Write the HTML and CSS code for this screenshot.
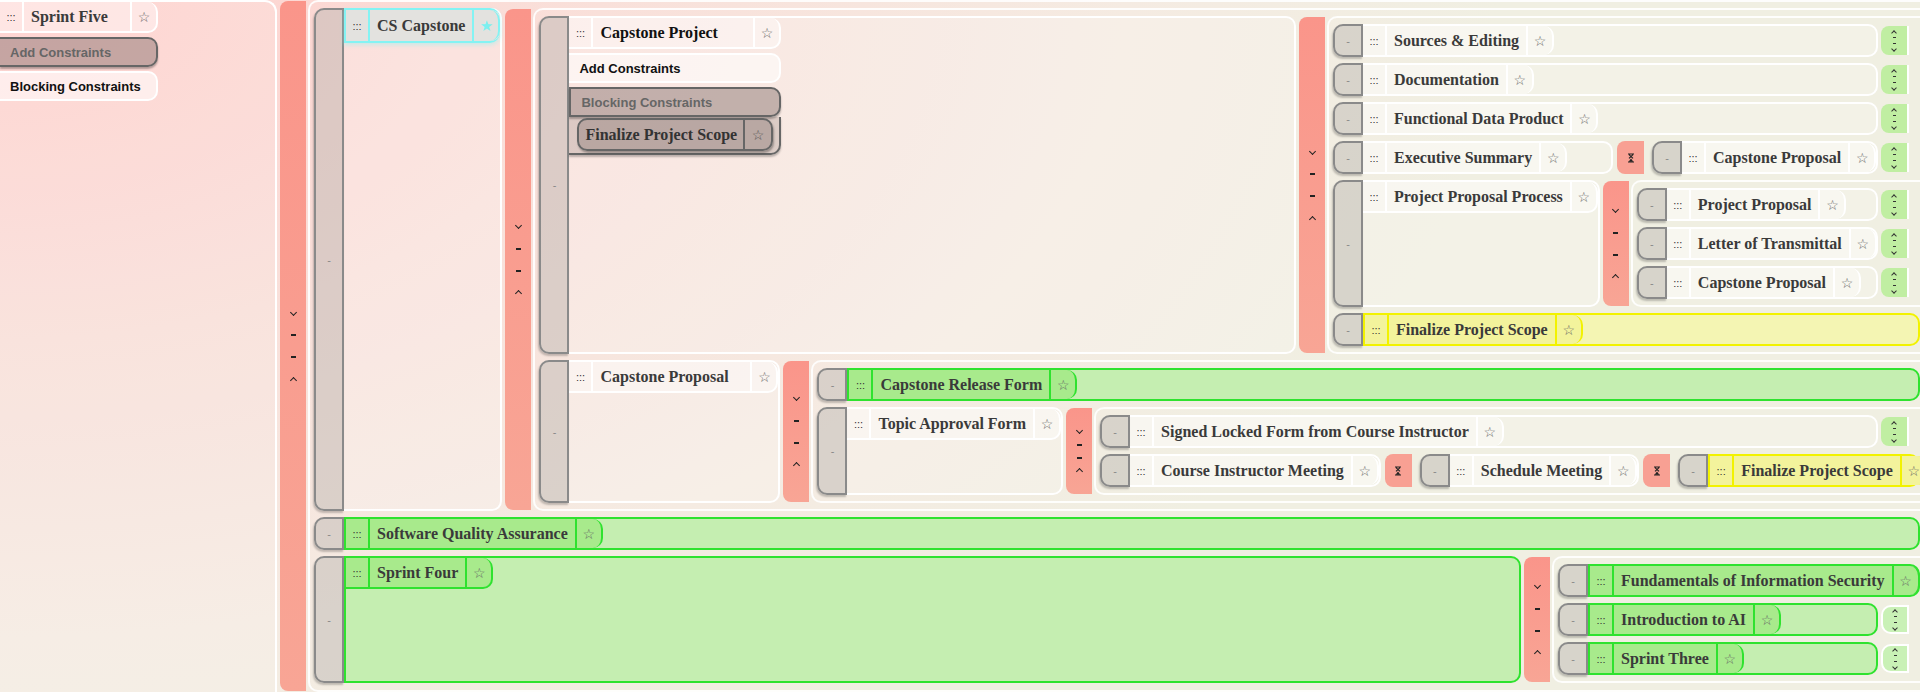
FILE: index.html
```html
<!DOCTYPE html>
<html lang="en">
<head>
<meta charset="utf-8">
<title>Tree</title>
<link rel="stylesheet" href="styles.css">
</head>
<body>
<div class="root">
  <div class="panel">
    <div class="stack">
      <div class="head hb"><span class="grip">:::</span><span class="title">Sprint Five</span><span class="star">☆</span></div>
      <div class="btn active">Add Constraints</div>
      <div class="btn">Blocking Constraints</div>
    </div>
  </div>
  <div class="conn"><i class="dn"></i><i class="ds"></i><i class="ds"></i><i class="up"></i></div>
  <div class="kids main">

    <div class="row">
      <div class="handle">-</div>
      <div class="card">
        <div class="head cy"><span class="grip">:::</span><span class="title">CS Capstone</span><span class="star">★</span></div>
      </div>
      <div class="conn"><i class="dn"></i><i class="ds"></i><i class="ds"></i><i class="up"></i></div>
      <div class="kids flex1">

        <div class="row">
          <div class="handle">-</div>
          <div class="card flex1">
            <div class="stack">
              <div class="head hb"><span class="grip">:::</span><span class="title dark">Capstone Project</span><span class="star">☆</span></div>
              <div class="btn">Add Constraints</div>
              <div class="btn active">Blocking Constraints</div>
              <div class="deps"><div class="chip"><span class="ct">Finalize Project Scope</span><span class="cs">☆</span></div></div>
            </div>
          </div>
          <div class="conn"><i class="dn"></i><i class="ds"></i><i class="ds"></i><i class="up"></i></div>
          <div class="kids k3">
            <div class="row">
              <div class="handle">-</div>
              <div class="card flex1"><div class="head"><span class="grip">:::</span><span class="title">Sources &amp; Editing</span><span class="star">☆</span></div></div>
              <div class="ctl"><i class="up"></i><i class="ds"></i><i class="ds"></i><i class="dn"></i></div>
            </div>
            <div class="row">
              <div class="handle">-</div>
              <div class="card flex1"><div class="head"><span class="grip">:::</span><span class="title">Documentation</span><span class="star">☆</span></div></div>
              <div class="ctl"><i class="up"></i><i class="ds"></i><i class="ds"></i><i class="dn"></i></div>
            </div>
            <div class="row">
              <div class="handle">-</div>
              <div class="card flex1"><div class="head"><span class="grip">:::</span><span class="title">Functional Data Product</span><span class="star">☆</span></div></div>
              <div class="ctl"><i class="up"></i><i class="ds"></i><i class="ds"></i><i class="dn"></i></div>
            </div>
            <div class="row">
              <div class="handle">-</div>
              <div class="card wex"><div class="head"><span class="grip">:::</span><span class="title">Executive Summary</span><span class="star">☆</span></div></div>
              <div class="hg"><svg width="8" height="10" viewBox="0 0 8 10"><path d="M1 1H7M1 9H7M2 1.6L6 5.4M6 1.6L2 5.4" stroke="#222" stroke-width="1.2" fill="none"/><path d="M4 5.6L6.4 8.8H1.6Z" fill="#222"/></svg></div>
              <div class="handle">-</div>
              <div class="card flex1"><div class="head"><span class="grip">:::</span><span class="title">Capstone Proposal</span><span class="star">☆</span></div></div>
              <div class="ctl"><i class="up"></i><i class="ds"></i><i class="ds"></i><i class="dn"></i></div>
            </div>
            <div class="row">
              <div class="handle">-</div>
              <div class="card"><div class="head hb"><span class="grip">:::</span><span class="title">Project Proposal Process</span><span class="star">☆</span></div></div>
              <div class="conn"><i class="dn"></i><i class="ds"></i><i class="ds"></i><i class="up"></i></div>
              <div class="kids flex1">
                <div class="row">
                  <div class="handle">-</div>
                  <div class="card flex1"><div class="head"><span class="grip">:::</span><span class="title">Project Proposal</span><span class="star">☆</span></div></div>
                  <div class="ctl"><i class="up"></i><i class="ds"></i><i class="ds"></i><i class="dn"></i></div>
                </div>
                <div class="row">
                  <div class="handle">-</div>
                  <div class="card flex1"><div class="head"><span class="grip">:::</span><span class="title">Letter of Transmittal</span><span class="star">☆</span></div></div>
                  <div class="ctl"><i class="up"></i><i class="ds"></i><i class="ds"></i><i class="dn"></i></div>
                </div>
                <div class="row">
                  <div class="handle">-</div>
                  <div class="card flex1"><div class="head"><span class="grip">:::</span><span class="title">Capstone Proposal</span><span class="star">☆</span></div></div>
                  <div class="ctl"><i class="up"></i><i class="ds"></i><i class="ds"></i><i class="dn"></i></div>
                </div>
              </div>
            </div>
            <div class="row">
              <div class="handle">-</div>
              <div class="card y flex1"><div class="head"><span class="grip">:::</span><span class="title">Finalize Project Scope</span><span class="star">☆</span></div></div>
            </div>
          </div>
        </div>

        <div class="row">
          <div class="handle">-</div>
          <div class="card">
            <div class="stack wide"><div class="head hb"><span class="grip">:::</span><span class="title">Capstone Proposal</span><span class="star">☆</span></div></div>
          </div>
          <div class="conn"><i class="dn"></i><i class="ds"></i><i class="ds"></i><i class="up"></i></div>
          <div class="kids flex1">
            <div class="row">
              <div class="handle">-</div>
              <div class="card g flex1"><div class="head"><span class="grip">:::</span><span class="title">Capstone Release Form</span><span class="star">☆</span></div></div>
            </div>
            <div class="row">
              <div class="handle">-</div>
              <div class="card"><div class="head hb"><span class="grip">:::</span><span class="title">Topic Approval Form</span><span class="star">☆</span></div></div>
              <div class="conn"><i class="dn"></i><i class="ds"></i><i class="ds"></i><i class="up"></i></div>
              <div class="kids flex1">
                <div class="row">
                  <div class="handle">-</div>
                  <div class="card flex1"><div class="head"><span class="grip">:::</span><span class="title">Signed Locked Form from Course Instructor</span><span class="star">☆</span></div></div>
                  <div class="ctl"><i class="up"></i><i class="ds"></i><i class="ds"></i><i class="dn"></i></div>
                </div>
                <div class="row">
                  <div class="handle">-</div>
                  <div class="card"><div class="head"><span class="grip">:::</span><span class="title">Course Instructor Meeting</span><span class="star">☆</span></div></div>
                  <div class="hg"><svg width="8" height="10" viewBox="0 0 8 10"><path d="M1 1H7M1 9H7M2 1.6L6 5.4M6 1.6L2 5.4" stroke="#222" stroke-width="1.2" fill="none"/><path d="M4 5.6L6.4 8.8H1.6Z" fill="#222"/></svg></div>
                  <div class="handle">-</div>
                  <div class="card"><div class="head"><span class="grip">:::</span><span class="title">Schedule Meeting</span><span class="star">☆</span></div></div>
                  <div class="hg"><svg width="8" height="10" viewBox="0 0 8 10"><path d="M1 1H7M1 9H7M2 1.6L6 5.4M6 1.6L2 5.4" stroke="#222" stroke-width="1.2" fill="none"/><path d="M4 5.6L6.4 8.8H1.6Z" fill="#222"/></svg></div>
                  <div class="handle">-</div>
                  <div class="card y flex1"><div class="head"><span class="grip">:::</span><span class="title">Finalize Project Scope</span><span class="star">☆</span></div></div>
                </div>
              </div>
            </div>
          </div>
        </div>

      </div>
    </div>

    <div class="row">
      <div class="handle">-</div>
      <div class="card g flex1"><div class="head"><span class="grip">:::</span><span class="title">Software Quality Assurance</span><span class="star">☆</span></div></div>
    </div>

    <div class="row">
      <div class="handle">-</div>
      <div class="card g flex1"><div class="head hb"><span class="grip">:::</span><span class="title">Sprint Four</span><span class="star">☆</span></div></div>
      <div class="conn"><i class="dn"></i><i class="ds"></i><i class="ds"></i><i class="up"></i></div>
      <div class="kids k4">
        <div class="row">
          <div class="handle">-</div>
          <div class="card g flex1"><div class="head"><span class="grip">:::</span><span class="title">Fundamentals of Information Security</span><span class="star">☆</span></div></div>
        </div>
        <div class="row">
          <div class="handle">-</div>
          <div class="card g flex1"><div class="head"><span class="grip">:::</span><span class="title">Introduction to AI</span><span class="star">☆</span></div></div>
          <div class="ctl lt"><i class="up"></i><i class="ds"></i><i class="ds"></i><i class="dn"></i></div>
        </div>
        <div class="row">
          <div class="handle">-</div>
          <div class="card g flex1"><div class="head"><span class="grip">:::</span><span class="title">Sprint Three</span><span class="star">☆</span></div></div>
          <div class="ctl lt"><i class="up"></i><i class="ds"></i><i class="ds"></i><i class="dn"></i></div>
        </div>
      </div>
    </div>

  </div>
</div>
</body>
</html>
```

FILE: styles.css
```css
* { box-sizing: border-box; }
html, body { margin: 0; height: 692px; overflow: hidden; }
body {
  background: radial-gradient(ellipse 1500px 850px at 0 0, #ffd0cd 0%, #f9e0da 40%, #f5ebe2 75%, #f0efe2 100%);
  font-family: "Liberation Sans", Arial, sans-serif;
}
i { font-style: normal; }

.root { display: flex; height: 692px; }

.panel {
  flex: 0 0 277px;
  border: 2px solid #fff;
  border-left: none;
  border-bottom: none;
  border-radius: 0 12px 0 0;
  background: rgba(255, 255, 255, 0.1);
}

/* node cards */
.card {
  --c: #fff;
  --cell: rgba(255, 255, 255, 0.4);
  display: flex;
  flex-direction: column;
  align-items: flex-start;
  min-width: 0;
  border: 2px solid var(--c);
  border-left: none;
  border-radius: 0 10px 10px 0;
  background: rgba(255, 255, 255, 0.2);
}
.card.g { --c: #2fe22f; --cell: #a8ea8c; background: #c5eeb1; border-left: 2px solid var(--c); }
.card.y { --c: #f2f200; --cell: #f3f39c; background: #f4f5b3; border-left: 2px solid var(--c); }
.card.wex { flex: 0 0 250px; }
.flex1 { flex: 1 1 0; }

.stack { display: flex; flex-direction: column; min-width: 158px; }
.stack.wide { min-width: 209px; }
.panel .stack { width: 158px; }

.head { display: flex; height: 29px; flex: none; }
.head.hb { height: 31px; }
.head.hb > * { border-bottom: 2px solid var(--c, #fff); }
.panel .head > * { --c: #fff; }

.grip {
  flex: none;
  width: 24px;
  display: flex;
  align-items: center;
  justify-content: center;
  font: 11px "Liberation Sans", Arial, sans-serif;
  color: #333;
  background: var(--cell, rgba(255, 255, 255, 0.4));
  border-right: 2px solid var(--c, #fff);
}
.title {
  flex: 1 0 auto;
  display: flex;
  align-items: center;
  padding: 0 7px;
  font: bold 16px "Liberation Serif", "Times New Roman", serif;
  color: #3a3a3a;
  white-space: nowrap;
  background: var(--cell, rgba(255, 255, 255, 0.4));
  border-right: 2px solid var(--c, #fff);
}
.title.dark { color: #111; }
.star {
  flex: none;
  width: 26px;
  display: flex;
  align-items: center;
  justify-content: center;
  font: 14px "DejaVu Sans", sans-serif;
  color: #666;
  background: var(--cell, rgba(255, 255, 255, 0.4));
  border-right: 2px solid var(--c, #fff);
  border-radius: 0 10px 10px 0;
}

/* cyan highlighted header */
.head.cy {
  --c: #84f3f3;
  --cell: #e3e2df;
  height: 35px;
  margin-top: -2px;
  border: 2px solid #84f3f3;
  border-right: none;
  border-radius: 0 10px 10px 0;
  box-shadow: 0 2px 4px rgba(132, 243, 243, 0.45);
}
.head.cy .star { color: #7cf0f0; font-size: 15px; }

/* buttons */
.btn {
  height: 30px;
  margin-top: 4px;
  display: flex;
  align-items: center;
  padding-left: 10px;
  font: bold 13px "Liberation Sans", Arial, sans-serif;
  color: #111;
  white-space: nowrap;
  background: rgba(255, 255, 255, 0.55);
  border: 2px solid #fff;
  border-left: none;
  border-radius: 0 10px 10px 0;
}
.btn.active {
  background: rgba(105, 85, 82, 0.38);
  border: 2px solid #666;
  color: #666;
  box-shadow: 0 2px 2px rgba(0, 0, 0, 0.3);
}
.panel .btn.active { border-left: none; }
.deps {
  height: 38px;
  display: flex;
  padding: 1px 6px 0 8px;
  background: rgba(120, 100, 95, 0.22);
  border: 2px solid #666;
  border-top: none;
  border-left: none;
  border-radius: 0 0 10px 0;
  box-shadow: 0 2px 2px rgba(0, 0, 0, 0.25);
}
.chip {
  display: flex;
  height: 33px;
  border: 2px solid #666;
  border-radius: 10px;
  background: rgba(105, 85, 82, 0.3);
  box-shadow: 1px 2px 2px rgba(0, 0, 0, 0.3);
}
.ct {
  display: flex;
  align-items: center;
  padding: 0 6px;
  font: bold 16px "Liberation Serif", "Times New Roman", serif;
  color: #333;
  white-space: nowrap;
  border-right: 2px solid #666;
}
.cs {
  width: 26px;
  display: flex;
  align-items: center;
  justify-content: center;
  font: 14px "DejaVu Sans", sans-serif;
  color: #555;
}

/* rows & children lists */
.row { display: flex; align-items: stretch; flex: none; }
.kids {
  display: flex;
  flex-direction: column;
  gap: 6px;
  min-width: 0;
  margin-left: 2px;
  padding: 6px 0 6px 4px;
  border: 2px solid rgba(255, 255, 255, 0.9);
  border-right: none;
  border-radius: 10px 0 0 10px;
}
.kids.main { flex: 1 1 0; }
.kids.k3 { flex: 0 0 593px; }
.kids.k4 { flex: 0 0 368px; }

.handle {
  flex: 0 0 30px;
  display: flex;
  align-items: center;
  justify-content: center;
  font: 11px "Liberation Sans", Arial, sans-serif;
  color: #888;
  background: rgba(185, 180, 175, 0.45);
  border: 2px solid #8a8a8a;
  border-radius: 10px 0 0 10px;
  box-shadow: -1px 2px 2px rgba(0, 0, 0, 0.22);
}

/* red connector bars (sized by the row, not by their marks) */
.conn {
  flex: 0 0 26px;
  contain: size;
  margin: 1px 0 1px 3px;
  padding: 17px 0;
  display: flex;
  flex-direction: column;
  align-items: center;
  justify-content: center;
  background: linear-gradient(#fa958a, #f8a595);
  border-radius: 8px 0 0 8px;
}
.conn > i, .ctl > i {
  display: flex;
  align-items: center;
  justify-content: center;
  width: 100%;
  flex: 0 1 22px;
  min-height: 0;
}
.dn::before, .up::before {
  content: "";
  width: 4px;
  height: 4px;
  border: 0 solid #222;
}
.dn::before { border-right-width: 1.5px; border-bottom-width: 1.5px; transform: translateY(-1px) rotate(45deg); }
.up::before { border-left-width: 1.5px; border-top-width: 1.5px; transform: translateY(1px) rotate(45deg); }
.ds::before { content: ""; width: 5px; height: 2px; background: #222; }

/* hourglass link */
.hg {
  flex: 0 0 27px;
  margin: 0 8px 0 4px;
  display: flex;
  align-items: center;
  justify-content: center;
  background: #f8a093;
  border-radius: 8px 0 0 8px;
}

/* right-side move control */
.ctl {
  flex: 0 0 28px;
  margin: 2px 11px 2px 3px;
  display: flex;
  flex-direction: column;
  align-items: center;
  justify-content: center;
  background: #c0eea2;
  border-right: 2px solid #fff;
  border-radius: 8px 0 0 8px;
}
.ctl.lt { background: #c9f1b6; border: 2px solid #fff; border-radius: 10px 0 0 10px; }
.ctl > i { flex: 0 0 6px; }
.ctl .dn::before, .ctl .up::before { width: 3px; height: 3px; border-color: #333; }
.ctl .dn::before { border-right-width: 1.3px; border-bottom-width: 1.3px; }
.ctl .up::before { border-left-width: 1.3px; border-top-width: 1.3px; }
.ctl .ds::before { width: 3px; height: 1.5px; background: #333; }
```
